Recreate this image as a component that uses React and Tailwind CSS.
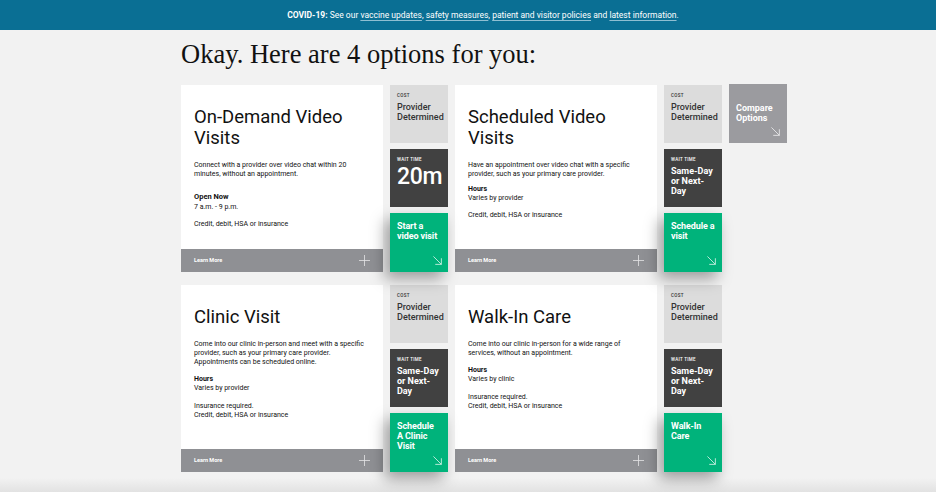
import React from "react";

const sans = { fontFamily: "Roboto, 'Liberation Sans', sans-serif" };

function Arrow({ className = "" }) {
  return (
    <svg viewBox="0 0 10 10" className={className} fill="none" stroke="currentColor" strokeWidth="0.9">
      <path d="M0.5 0.5 L9.3 9.3" />
      <path d="M9.3 2.5 V9.3 H2.5" />
    </svg>
  );
}

function Plus() {
  return (
    <svg viewBox="0 0 11 11" className="w-[11px] h-[11px] text-[#e4e4e6]" fill="none" stroke="currentColor" strokeWidth="0.8">
      <path d="M5.5 0 V11 M0 5.5 H11" />
    </svg>
  );
}

function Option({ title, body, wait, waitBig, action }) {
  return (
    <div className="flex gap-[7px]">
      <div className="w-[202px] h-[187px] bg-white flex flex-col">
        <div className="flex-1 pl-[13px] pr-[10px] pt-[22px] text-[#111]">
          <h2 className="text-[18.5px] leading-[21px] font-normal">{title}</h2>
          <div className="mt-[12px] text-[7px] leading-[9px]">{body}</div>
        </div>
        <div className="h-[23px] bg-[#8f9094] flex items-center justify-between pl-[13px] pr-[13px]">
          <span className="text-[5.5px] font-bold text-white">Learn More</span>
          <Plus />
        </div>
      </div>
      <div className="w-[58px] flex flex-col gap-[6px]">
        <div className="h-[58px] bg-[#dcdcdc] px-[7px] pt-[8px] text-[#333]">
          <div className="text-[4.5px] leading-[6px] font-medium tracking-[0.3px]">COST</div>
          <div className="mt-[3px] text-[9px] leading-[10px] font-medium">Provider Determined</div>
        </div>
        <div className="h-[58px] bg-[#414141] px-[7px] pt-[8px] text-white">
          <div className="text-[4.5px] leading-[6px] font-medium tracking-[0.3px]">WAIT TIME</div>
          {waitBig ? (
            <div className="mt-[1px] text-[23px] leading-[26px] font-medium tracking-[-0.3px]">{wait}</div>
          ) : (
            <div className="mt-[3px] text-[9px] leading-[10px] font-bold">{wait}</div>
          )}
        </div>
        <div className="h-[59px] bg-[#00b37b] pl-[7px] pr-[6px] pt-[8px] text-white flex flex-col justify-between pb-[7px] shadow-[-5px_7px_14px_rgba(0,0,0,0.35)] relative z-10">
          <div className="text-[9px] leading-[10px] font-bold whitespace-nowrap tracking-[-0.1px]">{action}</div>
          <div className="flex justify-end">
            <Arrow className="w-[9px] h-[9px] text-[#dff5ec]" />
          </div>
        </div>
      </div>
    </div>
  );
}

const sameDay = <>Same-Day<br />or Next-<br />Day</>;

export default function App() {
  return (
    <div className="w-[936px] h-[492px] bg-[#f2f2f2] overflow-hidden flex flex-col" style={sans}>
      <div className="h-[30px] bg-[#0a6f94] flex items-center justify-center pl-[30px] text-white text-[8.5px]">
        <span>
          <b className="font-bold">COVID-19:</b> See our{" "}
          <span className="underline decoration-[#8fbfd2] underline-offset-2">vaccine updates</span>,{" "}
          <span className="underline decoration-[#8fbfd2] underline-offset-2">safety measures</span>,{" "}
          <span className="underline decoration-[#8fbfd2] underline-offset-2">patient and visitor policies</span> and{" "}
          <span className="underline decoration-[#8fbfd2] underline-offset-2">latest information</span>.
        </span>
      </div>
      <div className="pl-[181px] flex-1">
        <h1
          className="mt-[7px] text-[26.5px] leading-[34px] text-[#111]"
          style={{ fontFamily: "'Liberation Serif', Georgia, serif" }}
        >
          Okay. Here are 4 options for you:
        </h1>
        <div className="mt-[14px] flex gap-[7px] items-start">
          <div className="flex flex-col gap-[13px]">
            <div className="flex gap-[7px]">
              <Option
                title={<>On-Demand Video<br />Visits</>}
                waitBig
                wait="20m"
                action={<>Start a<br />video visit</>}
                body={
                  <>
                    <p>Connect with a provider over video chat within 20 minutes, without an appointment.</p>
                    <p className="mt-[13px] font-bold text-[7.5px]">Open Now</p>
                    <p className="mt-[2px]">7 a.m. - 9 p.m.</p>
                    <p className="mt-[8px]">Credit, debit, HSA or insurance</p>
                  </>
                }
              />
              <Option
                title={<>Scheduled Video<br />Visits</>}
                wait={sameDay}
                action={<>Schedule a<br />visit</>}
                body={
                  <>
                    <p>Have an appointment over video chat with a specific provider, such as your primary care provider.</p>
                    <p className="mt-[6px] font-bold">Hours</p>
                    <p>Varies by provider</p>
                    <p className="mt-[8px]">Credit, debit, HSA or insurance</p>
                  </>
                }
              />
            </div>
            <div className="flex gap-[7px]">
              <Option
                title="Clinic Visit"
                wait={sameDay}
                action={<>Schedule<br />A Clinic<br />Visit</>}
                body={
                  <>
                    <p>Come into our clinic in-person and meet with a specific provider, such as your primary care provider. Appointments can be scheduled online.</p>
                    <p className="mt-[8px] font-bold">Hours</p>
                    <p>Varies by provider</p>
                    <p className="mt-[9px]">Insurance required.</p>
                    <p>Credit, debit, HSA or insurance</p>
                  </>
                }
              />
              <Option
                title="Walk-In Care"
                wait={sameDay}
                action={<>Walk-In<br />Care</>}
                body={
                  <>
                    <p>Come into our clinic in-person for a wide range of services, without an appointment.</p>
                    <p className="mt-[8px] font-bold">Hours</p>
                    <p>Varies by clinic</p>
                    <p className="mt-[9px]">Insurance required.</p>
                    <p>Credit, debit, HSA or insurance</p>
                  </>
                }
              />
            </div>
          </div>
          <div className="w-[58px] h-[59px] -mt-[1px] bg-[#9b9b9f] px-[7px] pt-[19px] pb-[7px] flex flex-col justify-between text-white">
            <div className="text-[9px] leading-[10px] font-bold">Compare<br />Options</div>
            <div className="flex justify-end">
              <Arrow className="w-[9px] h-[9px] text-[#eeeeef]" />
            </div>
          </div>
        </div>
      </div>
      <div className="h-[14px] bg-gradient-to-b from-[#f2f2f2] to-[#e2e2e2]" />
    </div>
  );
}
